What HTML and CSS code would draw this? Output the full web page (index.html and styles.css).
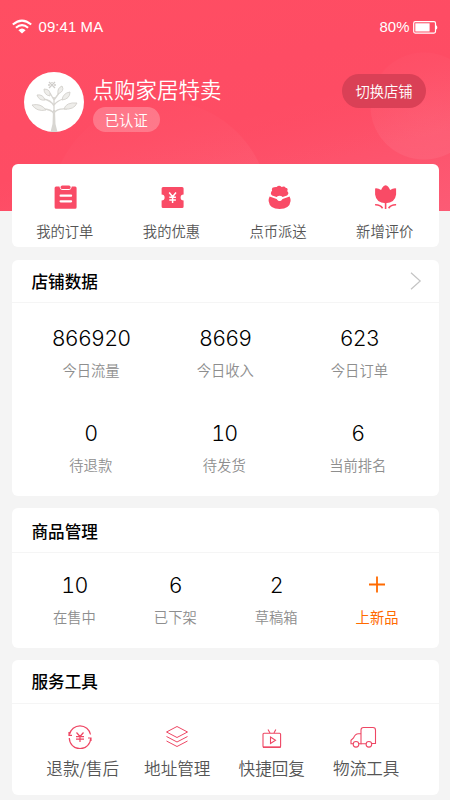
FILE: index.html
```html
<!DOCTYPE html>
<html lang="zh-CN">
<head>
<meta charset="utf-8">
<title>点购家居特卖</title>
<link rel="stylesheet" href="styles.css">
</head>
<body>
<div class="page">
  <header class="statusbar">
    <svg class="wifi" width="20" height="16" viewBox="0 0 20 16" fill="none" stroke="#fff" stroke-width="2"><path d="M.8 5.600Q10-2.400 19.200 5.600"/><path d="M3.900 8.800Q10 3.400 16.100 8.800"/><path d="M6.400 11.200Q10 7.900 13.600 11.200L10 14.600Z" fill="#fff" stroke="none"/></svg>
    <span class="time">09:41 MA</span>
    <span class="percent">80%</span>
    <svg class="battery" width="25" height="13" viewBox="0 0 25 13"><rect x=".7" y=".7" width="21.800" height="11.400" rx="1.500" fill="none" stroke="#fff" stroke-width="1.200"/><path d="M2.300 2.300H16.600V10.500H2.300Z" fill="#fff"/><path d="M23 4.300Q24.300 4.500 24.300 6.400T23 8.500Z" fill="#fff"/></svg>
  </header>

  <section class="shop">
    <svg class="avatar" width="60" height="60" viewBox="0 0 60 60">
      <circle cx="30" cy="30" r="30" fill="#fff"/>
      <g fill="none" stroke="#d8d6d2" stroke-width="1.300"><path d="M30 52V25M30 42Q28 37 18 37M30 41Q33 36 43 37M30 34Q27 28 19 27M30 33Q33 29 39 27M30 28L26 21M30 28L35 21"/></g>
      <path d="M29 38H31L31.500 52L33.500 60H26.500L28.500 52Z" fill="#d8d6d2"/>
      <g fill="#eeedea" stroke="#d2d0cc" stroke-width=".9"><path d="M8 33Q17 31 22 38Q13 40 8 33ZM40 37Q42 30 53 31Q50 38 40 37ZM13 23Q19 22 21 28Q15 29 13 23ZM20 17Q27 17 26 24Q20 23 20 17ZM34 22Q33 16 38 14Q41 19 34 22ZM38 28Q39 21 46 20Q46 27 38 28Z"/></g>
      <path d="M25 10L31 16M31 10L25 16M28 10V11M24 13H26M30 13H32" stroke="#cfcdca" stroke-width="1.300" fill="none"/>
    </svg>
    <div class="identity">
      <h1 class="name">点购家居特卖</h1>
      <span class="verified">已认证</span>
    </div>
    <button class="switch">切换店铺</button>
  </section>

  <main class="cards">
    <nav class="card quick">
      <a class="quick-item">
        <svg width="24" height="24" viewBox="0 0 24 24"><path d="M2.500 1.500H5.800Q6.600 5 9 5H15Q17.400 5 18.200 1.500H21.500Q23 1.500 23 3V22.300Q23 23.800 21.500 23.800H2.500Q1 23.800 1 22.300V3Q1 1.500 2.500 1.500Z" fill="#f94b66"/><rect x="7" y=".5" width="10" height="3.500" rx="1.600" fill="#f94b66"/><path d="M7 10.700H17.500M7 16.300H17.500" stroke="#fff" stroke-width="2.200" stroke-linecap="round"/></svg>
        <span>我的订单</span>
      </a>
      <a class="quick-item">
        <svg width="24" height="24" viewBox="0 0 24 24"><path d="M2.500 2H21.500Q23 2 23 3.500V9.500A3 3 0 0 0 23 15.500V21.500Q23 23 21.500 23H2.500Q1 23 1 21.500V15.500A3 3 0 0 0 1 9.500V3.500Q1 2 2.500 2Z" fill="#f94b66"/><path d="M8.600 7.500L12 11.800L15.400 7.500M12 11.800V18M8.700 12.200H15.300M8.700 15H15.300" fill="none" stroke="#fff" stroke-width="1.500"/></svg>
        <span>我的优惠</span>
      </a>
      <a class="quick-item">
        <svg width="24" height="24" viewBox="0 0 24 24"><path d="M4.500 5.500Q3.500 2.500 6.500 2.300Q8 1.800 9 2Q11.500-.3 14 2Q17 .8 18 2.700Q21 3.200 19.600 6Q22 8.500 19.500 10.500L15 12Q12 9.500 9 12L4.500 10.500Q2 8.500 4.500 5.500Z" fill="#f94b66"/><path d="M2 11.500L9 14Q12 18 15 14L22 11.500Q23 13.500 23 16Q22 24 12 24T1 16Q1 13.500 2 11.500Z" fill="#f94b66"/><circle cx="12" cy="13.400" r="2.400" fill="#fff"/></svg>
        <span>点币派送</span>
      </a>
      <a class="quick-item">
        <svg width="24" height="24" viewBox="0 0 24 24"><path d="M1.500 3.400Q4.500 3 7.500 5Q9 1 12 .2Q15 1 16.500 5Q19.500 3 22.500 3.400V9.500Q21.500 17.800 12 18.300Q2.500 17.800 1.500 9.500Z" fill="#f94b66"/><path d="M12 17V24M1.500 19.800Q6.500 19.600 9 23.200M22.500 19.800Q17.500 19.600 15 23.200" fill="none" stroke="#f94b66" stroke-width="1.600"/></svg>
        <span>新增评价</span>
      </a>
    </nav>

    <section class="card data">
      <div class="card-head">
        <h2>店铺数据</h2>
        <svg width="12" height="18" viewBox="0 0 12 18" fill="none" stroke="#c4c4c4" stroke-width="1.200"><path d="M1 .8L10.200 9L1 17.200"/></svg>
      </div>
      <div class="stats">
        <div class="stat"><b>866920</b><span>今日流量</span></div>
        <div class="stat"><b>8669</b><span>今日收入</span></div>
        <div class="stat"><b>623</b><span>今日订单</span></div>
      </div>
      <div class="stats second">
        <div class="stat"><b>0</b><span>待退款</span></div>
        <div class="stat"><b>10</b><span>待发货</span></div>
        <div class="stat"><b>6</b><span>当前排名</span></div>
      </div>
    </section>

    <section class="card goods">
      <div class="card-head"><h2>商品管理</h2></div>
      <div class="stats four">
        <div class="stat"><b>10</b><span>在售中</span></div>
        <div class="stat"><b>6</b><span>已下架</span></div>
        <div class="stat"><b>2</b><span>草稿箱</span></div>
        <div class="stat add"><svg width="16" height="28" viewBox="0 0 16 28" fill="none" stroke="#ff6a00" stroke-width="1.800"><path d="M0 13.500H16M8 5.500V21.500"/></svg><span>上新品</span></div>
      </div>
    </section>

    <section class="card service">
      <div class="card-head"><h2>服务工具</h2></div>
      <div class="tools">
        <a class="tool edge">
          <svg width="26" height="24" viewBox="0 0 26 24" fill="none" stroke="#ee4764" stroke-width="1.200"><path d="M2.500 9.500A10.700 10.700 0 0 1 23.500 9.500M23.700 13A10.700 10.700 0 0 1 2.300 13M2 7V10.300H5M24 16V13H21"/><path d="M9.500 7.500L13 11.500L16.500 7.500M13 11.500V17M9 11.700H17M9 14.200H17"/></svg>
          <span>退款/售后</span>
        </a>
        <a class="tool">
          <svg width="26" height="24" viewBox="0 0 26 24" fill="none" stroke="#ee4764" stroke-width="1"><path d="M13 1.500L23.500 7L13 12.500L2.500 7Z"/><path d="M2.500 11.500L13 17L23.500 11.500M2.500 16L13 21.500L23.500 16"/></svg>
          <span>地址管理</span>
        </a>
        <a class="tool">
          <svg width="26" height="24" viewBox="0 0 26 24" fill="none" stroke="#ee4764" stroke-width="1.100"><rect x="4" y="8.200" width="17.600" height="14" rx="1"/><path d="M9 4.500L11 8M16.800 4.500L15 8M11.500 12V18.500L16.500 15.300Z"/><path d="M4 22.200H21.600" stroke-width="1.500"/></svg>
          <span>快捷回复</span>
        </a>
        <a class="tool edge">
          <svg width="28" height="24" viewBox="0 0 28 24" fill="none" stroke="#ee4764" stroke-width="1.100"><path d="M12 19.500V5Q12 2.500 14.500 2.500H24Q26.500 2.500 26.500 5V18.500H23M17 18.800H10M12 8.800H9.500Q6 9 4.500 13L2 15.300V18.700H4"/><circle cx="7" cy="19.300" r="2.800"/><circle cx="19.900" cy="19.300" r="2.800"/></svg>
          <span>物流工具</span>
        </a>
      </div>
    </section>
  </main>
</div>
</body>
</html>
```

FILE: styles.css
```css
* {
  box-sizing: border-box;
}

body {
  margin: 0;
  background: #f4f4f4;
  color: #111;
  font-family: "Noto Sans CJK SC", sans-serif;
  font-weight: 350;
}

.page {
  height: 800px;
  overflow: hidden;
  background-image:
    linear-gradient(165deg, #ff4e62 0%, #fe4c64 40%, transparent 75%),
    radial-gradient(circle at 424px 106px, rgba(255, 255, 255, .08) 0, rgba(255, 255, 255, .06) 53px, transparent 54px),
    radial-gradient(circle at 160px 210px, rgba(255, 255, 255, .05) 0, rgba(255, 255, 255, .05) 109px, transparent 110px),
    linear-gradient(165deg, #ff4e62 0%, #fe4c64 55%, #fc5b75 100%);
  background-size: 100% 211px;
  background-repeat: no-repeat;
}

.statusbar {
  display: flex;
  align-items: center;
  height: 54px;
  padding: 0 12px;
  color: #fff;
  font: 400 14.900px/20px "Liberation Sans", sans-serif;
}

.wifi {
  margin-right: 6.500px;
}

.time {
  letter-spacing: .12px;
}

.percent {
  margin-left: auto;
  margin-right: 3.500px;
  letter-spacing: .1px;
}

.shop {
  display: flex;
  align-items: flex-start;
  height: 109.500px;
  padding: 18px 24px 0;
  color: #fff;
}

.identity {
  margin-left: 8.500px;
}

.name {
  margin: 0;
  font-size: 21.500px;
  line-height: 34px;
  font-weight: 350;
}

.verified {
  display: block;
  width: 67.500px;
  height: 25px;
  margin-top: 1px;
  border-radius: 13px;
  background: rgba(255, 255, 255, .24);
  font-size: 14.300px;
  line-height: 25px;
  text-align: center;
}

.switch {
  width: 84px;
  height: 34px;
  margin: 2px 0 0 auto;
  padding: 0;
  border: 0;
  border-radius: 17px;
  background: #da4056;
  color: #fff;
  font: inherit;
  font-size: 14.300px;
  line-height: 34px;
}

.cards {
  display: flex;
  flex-direction: column;
  gap: 12.500px;
  padding: 0 11.500px 0 12px;
}

.card {
  border-radius: 6px;
  background: #fff;
}

.quick {
  display: grid;
  grid-template-columns: repeat(4, 1fr);
  height: 83.500px;
  padding-top: 21.500px;
}

.quick-item,
.stat,
.tool {
  display: flex;
  flex-direction: column;
  align-items: center;
}

.quick-item {
  color: #555;
  font-size: 14.300px;
  line-height: 22px;
}

.quick-item svg {
  margin-bottom: 10.800px;
  transform: translateX(.6px);
}

.quick-item span {
  transform: translateX(-.5px);
}

.card-head {
  display: flex;
  align-items: center;
  justify-content: space-between;
  height: 43.500px;
  padding: 0 17px 0 19.500px;
  border-bottom: 1px solid #f5f5f5;
}

.card-head h2 {
  margin: 0;
  color: #000;
  font-size: 16.600px;
  line-height: 24px;
  font-weight: 500;
}

.data {
  height: 236px;
}

.stats {
  display: grid;
  grid-template-columns: repeat(3, 1fr);
  height: 95px;
  padding: 21px 12px 0;
}

.second {
  padding-right: 14px;
}

.stats.four {
  grid-template-columns: repeat(4, 1fr);
  padding: 18.500px 11px 0 12px;
}

.stat b {
  font: 300 21.500px/28px Inter, sans-serif;
  font-variant-numeric: tabular-nums;
  letter-spacing: -.8px;
  color: #000;
}

.stat span {
  margin-top: 7.300px;
  color: #8e8e8e;
  font-size: 14.300px;
  line-height: 22px;
}

.stat.add span {
  color: #ff6a00;
  font-weight: 400;
}

.goods {
  height: 139.500px;
}

.goods .card-head {
  height: 44.500px;
  padding-top: 2px;
}

.service {
  height: 134.500px;
}

.tools {
  display: grid;
  grid-template-columns: repeat(4, 1fr);
  padding: 21px 25px 0 23.500px;
}

.tool {
  color: #555;
  font-size: 16.600px;
  line-height: 24px;
}

.tool svg {
  margin-bottom: 7.500px;
}

.tool.edge svg {
  transform: translateX(-3px);
}
```
